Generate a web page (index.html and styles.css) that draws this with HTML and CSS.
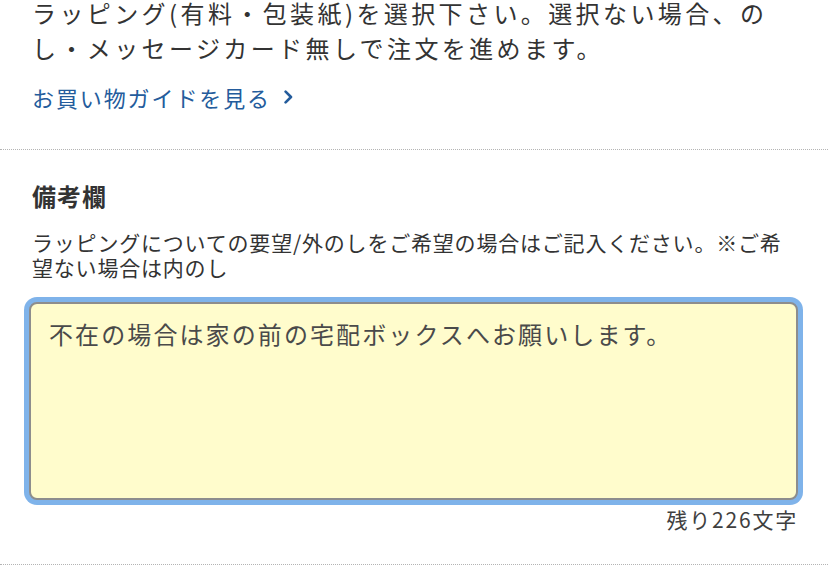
FILE: index.html
```html
<!DOCTYPE html>
<html lang="ja">
<head>
<meta charset="utf-8">
<title>備考欄</title>
<link rel="stylesheet" href="styles.css">
</head>
<body>
<section class="wrap-section">
  <p class="note">ラッピング(有料・包装紙)を選択下さい。選択ない場合、のし・メッセージカード無しで注文を進めます。</p>
  <a class="guide-link" href="#">お買い物ガイドを見る<svg class="chev" width="9" height="14" viewBox="0 0 9 14" aria-hidden="true"><path d="M1.6 1.6 L7 7 L1.6 12.4" fill="none" stroke="currentColor" stroke-width="2.6" stroke-linecap="round" stroke-linejoin="round"/></svg></a>
</section>
<section class="remarks">
  <h2 class="remarks-title">備考欄</h2>
  <p class="remarks-desc">ラッピングについての要望/外のしをご希望の場合はご記入ください。※ご希望ない場合は内のし</p>
  <textarea class="remarks-input" readonly>不在の場合は家の前の宅配ボックスへお願いします。</textarea>
  <div class="counter">残り226文字</div>
</section>
</body>
</html>
```
FILE: styles.css
```css
html, body {
  margin: 0;
  padding: 0;
  background: #ffffff;
}
body {
  font-family: "Noto Sans CJK JP", "Noto Sans", sans-serif;
  color: #333333;
  width: 828px;
  overflow: hidden;
}
.wrap-section {
  padding: 0 46px 37px 32px;
  border-bottom: 1px dotted #b4b4b4;
}
.note {
  margin: -5px 0 0;
  font-size: 24px;
  line-height: 35px;
  letter-spacing: 3.4px;
  color: #333333;
}
.guide-link {
  display: flex;
  align-items: center;
  margin-top: 17px;
  font-size: 22px;
  line-height: 30px;
  letter-spacing: 1.9px;
  color: #245c9c;
  text-decoration: none;
}
.chev {
  margin-left: 13px;
  color: #245c9c;
}
.remarks {
  padding: 30px 32px 33px;
  border-bottom: 1px dotted #b4b4b4;
}
.remarks-title {
  margin: 0;
  font-size: 24px;
  line-height: 32px;
  font-weight: 700;
  letter-spacing: 1px;
  color: #333333;
}
.remarks-desc {
  margin: 18px 0 0;
  font-size: 21px;
  line-height: 25px;
  letter-spacing: 0.8px;
  color: #333333;
}
.remarks-input {
  display: block;
  box-sizing: border-box;
  width: calc(100% + 5px);
  height: 198px;
  margin: 22px 0 0 -3px;
  padding: 13px 16px 13px 18px;
  border: 2px solid #8d8d8d;
  border-radius: 8px;
  box-shadow: 0 0 0 5px #7fb3ea;
  background: #fffccc;
  font-family: "Noto Sans CJK JP", "Noto Sans", sans-serif;
  font-size: 24px;
  line-height: 34px;
  letter-spacing: 2.1px;
  color: #4a4a4a;
  resize: none;
  outline: none;
}
.counter {
  margin-top: 7px;
  text-align: right;
  font-size: 21px;
  line-height: 24px;
  letter-spacing: 1.8px;
  margin-right: -2px;
  color: #3f3f3f;
}
```
